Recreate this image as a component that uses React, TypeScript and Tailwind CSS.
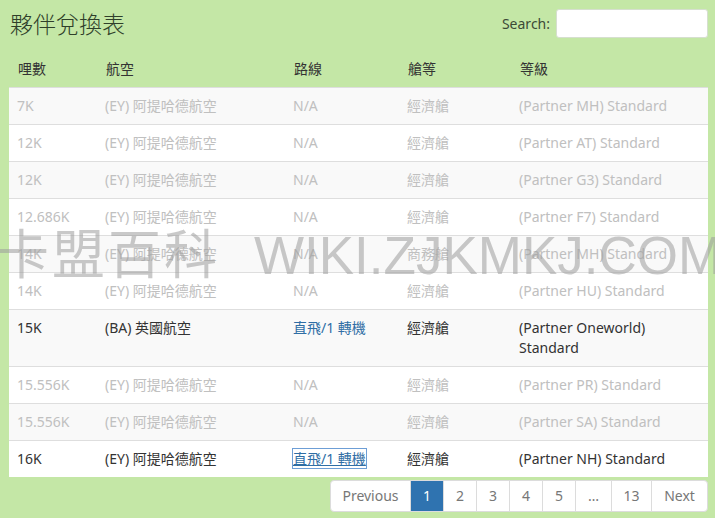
import React from "react";

type Row = {
  miles: string;
  airline: string;
  route: string;
  cabin: string;
  level: string;
  active?: boolean;
  focused?: boolean;
};

const ROWS: Row[] = [
  { miles: "7K", airline: "(EY) 阿提哈德航空", route: "N/A", cabin: "經濟艙", level: "(Partner MH) Standard" },
  { miles: "12K", airline: "(EY) 阿提哈德航空", route: "N/A", cabin: "經濟艙", level: "(Partner AT) Standard" },
  { miles: "12K", airline: "(EY) 阿提哈德航空", route: "N/A", cabin: "經濟艙", level: "(Partner G3) Standard" },
  { miles: "12.686K", airline: "(EY) 阿提哈德航空", route: "N/A", cabin: "經濟艙", level: "(Partner F7) Standard" },
  { miles: "14K", airline: "(EY) 阿提哈德航空", route: "N/A", cabin: "商務艙", level: "(Partner MH) Standard" },
  { miles: "14K", airline: "(EY) 阿提哈德航空", route: "N/A", cabin: "經濟艙", level: "(Partner HU) Standard" },
  { miles: "15K", airline: "(BA) 英國航空", route: "直飛/1 轉機", cabin: "經濟艙", level: "(Partner Oneworld) Standard", active: true },
  { miles: "15.556K", airline: "(EY) 阿提哈德航空", route: "N/A", cabin: "經濟艙", level: "(Partner PR) Standard" },
  { miles: "15.556K", airline: "(EY) 阿提哈德航空", route: "N/A", cabin: "經濟艙", level: "(Partner SA) Standard" },
  { miles: "16K", airline: "(EY) 阿提哈德航空", route: "直飛/1 轉機", cabin: "經濟艙", level: "(Partner NH) Standard", active: true, focused: true },
];

const PAGES = ["Previous", "1", "2", "3", "4", "5", "…", "13", "Next"];

export default function App() {
  return (
    <div
      className="relative h-[518px] w-[715px] overflow-hidden bg-[#c4e7a6] text-[14px] leading-[20px] text-[#333]"
      style={{ fontFamily: '"Noto Sans", "Noto Sans CJK TC", sans-serif' }}
    >
      <div className="flex items-center justify-between pl-[10px] pr-[7px] pt-[9px]">
        <h1 className="text-[23px] font-light leading-[28px] text-[#2f3f2a]">夥伴兌換表</h1>
        <label className="flex items-center gap-[6px] text-[14px] text-[#3c4a36]">
          Search:
          <span className="block h-[29px] w-[152px] rounded-[3px] border border-[#d6dfcf] bg-white" />
        </label>
      </div>

      <div className="mx-[9px] mt-[13px] w-[699px]">
        <div className="grid h-[35px] grid-cols-[88px_188px_114px_112px_197px] items-center text-[#333]">
          {["哩數", "航空", "路線", "艙等", "等級"].map((h) => (
            <div key={h} className="px-[9px]">{h}</div>
          ))}
        </div>
        <div className="mt-[1px] bg-white">
          {ROWS.map((r, i) => (
            <div
              key={i}
              className={`grid grid-cols-[88px_188px_114px_112px_197px] border-t border-[#dedede] py-[8px] ${
                i % 2 === 0 ? "bg-[#f9f9f9]" : "bg-white"
              } ${r.active ? "text-[#333]" : "text-[#c0c0c0]"}`}
            >
              <div className="px-[8px]">{r.miles}</div>
              <div className="px-[8px]">{r.airline}</div>
              <div className="px-[8px]">
                {r.active ? (
                  <span
                    className={`text-[#2f6ea5] ${
                      r.focused ? "underline outline outline-1 outline-[#6d9ed6] outline-offset-0" : ""
                    }`}
                  >
                    {r.route}
                  </span>
                ) : (
                  r.route
                )}
              </div>
              <div className="px-[8px]">{r.cabin}</div>
              <div className="px-[8px]">{r.level}</div>
            </div>
          ))}
        </div>
      </div>

      <div className="mr-[7px] mt-[3px] flex justify-end">
        <div className="flex h-[32px] overflow-hidden rounded-[4px] border border-[#dcdcdc] bg-white text-[#777]">
          {PAGES.map((p) => (
            <div
              key={p}
              className={`flex items-center justify-center border-l border-[#dcdcdc] first:border-l-0 ${
                p === "1" ? "bg-[#2f73b0] text-white" : ""
              } ${
                p === "Previous" ? "w-[79px]" : p === "Next" ? "w-[56px]" : p === "…" ? "w-[36px]" : p === "13" ? "w-[40px]" : "w-[33px]"
              }`}
            >
              {p}
            </div>
          ))}
        </div>
      </div>

      {/* 워터마크 */}
      <div
        className="pointer-events-none absolute left-[-4px] top-[226px] flex items-center gap-[34px] whitespace-nowrap text-[53px] leading-[60px] text-[#9c9c9c]/55"
        style={{ fontFamily: '"Liberation Sans", "Noto Sans CJK TC", sans-serif' }}
      >
        <span className="tracking-[3px]">卡盟百科</span>
        <span>WIKI.ZJKMKJ.COM</span>
      </div>
    </div>
  );
}
